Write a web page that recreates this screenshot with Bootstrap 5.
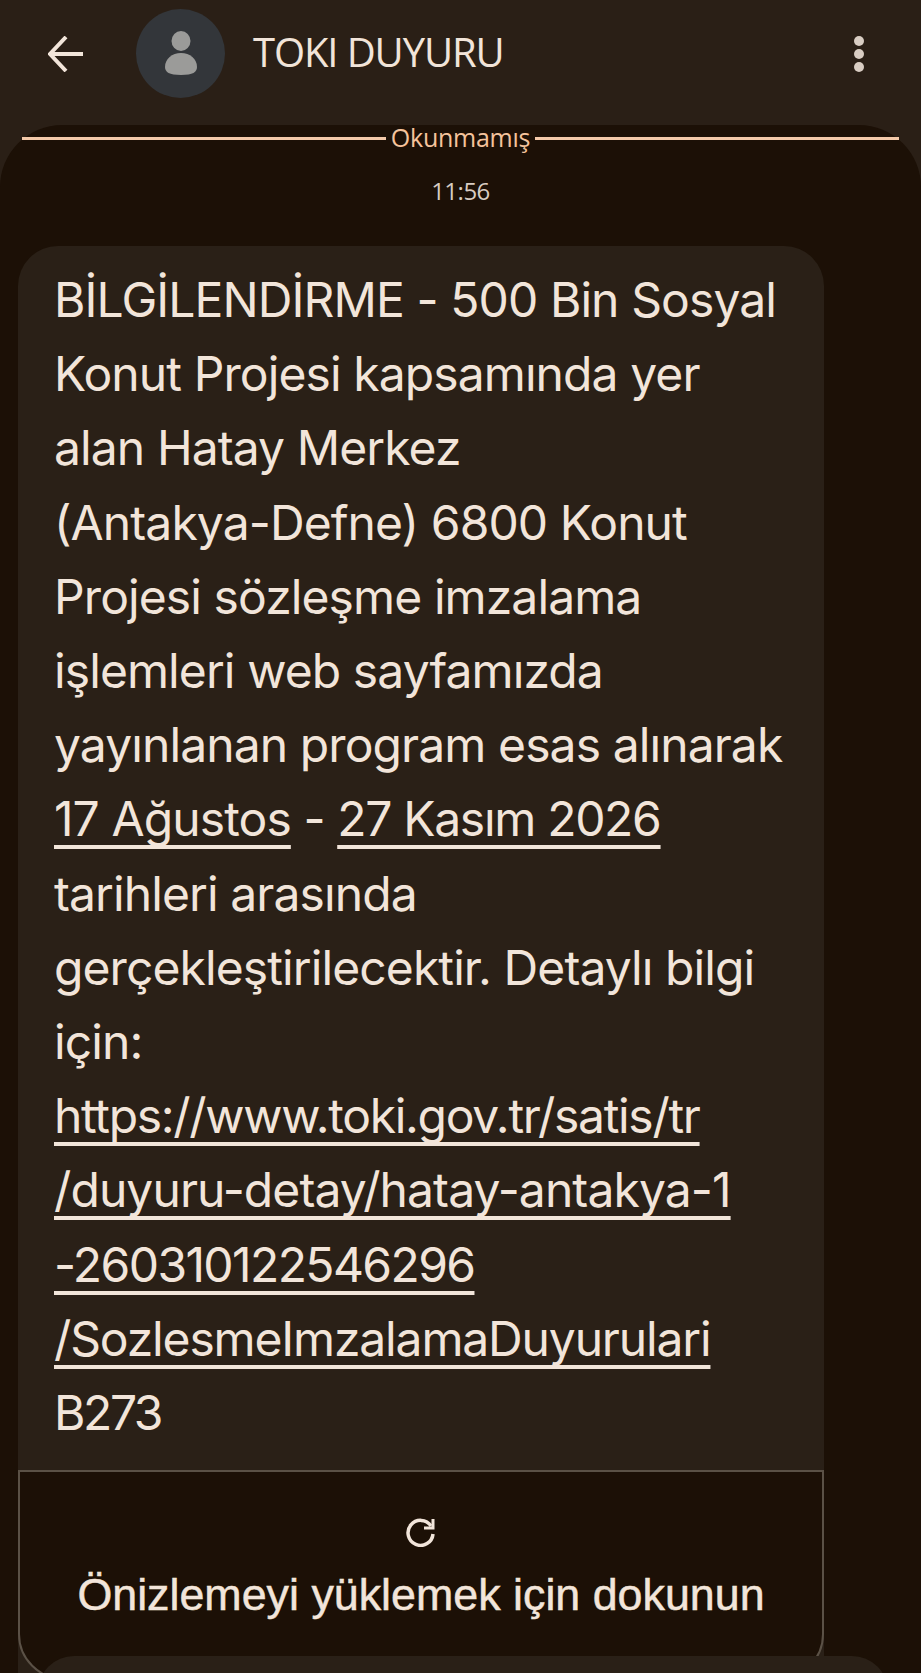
<!doctype html>
<html lang="tr"><head><meta charset="utf-8">
<link rel="stylesheet" href="https://cdn.jsdelivr.net/npm/bootstrap@5.3.0/dist/css/bootstrap.min.css">
<style>
html,body{margin:0;background:#2a1f16;height:1673px;overflow:hidden;font-family:"Inter","Liberation Sans",sans-serif;color:#f2e5da}
.topbar{height:125px;padding:0 55px 17px 48px}
.avatarc{width:89px;height:89px;background:#33363a;margin-left:52px;margin-top:-2px}
.ttl{font-size:40px;font-family:"Open Sans",sans-serif;margin:-4px 0 0 28px;letter-spacing:-1.1px;color:#f1e4d9}
.panel{background:#1c1006;border-radius:62px 62px 0 0;height:1548px}
.unread{padding:0 22px;height:25px;color:#f5c39c;font-size:25px;gap:5px;font-family:"Open Sans",sans-serif;letter-spacing:-.25px;line-height:25px}
.unread i{flex:1;height:3px;background:#f4c9a9;display:block;margin-top:2px}
.stamp{font-size:24px;color:#d8ccc2;text-align:center;margin-top:23px;height:73px;font-family:"Open Sans",sans-serif;letter-spacing:-.5px;line-height:36px}
.bubble{margin-left:18px;width:806px;background:#2a2017;border-radius:40px 40px 0 0}
.msg{padding:17px 0 20px 36px;font-size:48px;line-height:74.2px;white-space:nowrap;font-family:"Inter",sans-serif;letter-spacing:-.9px}
.msg u{text-underline-offset:9px;text-decoration-thickness:4px;text-decoration-skip-ink:none}
.tight1{letter-spacing:-1.3px}
.tight2{letter-spacing:-1.15px}
.tight3{letter-spacing:-1.6px}
.tight4{letter-spacing:-2.4px}
.prev{height:210px;background:#1c1006;border:2px solid #5b5146;border-radius:0 0 46px 46px;padding-top:45px}
.prev svg{display:block;margin:0 auto}
.prevt{font-size:44.800px;font-family:"Liberation Sans",sans-serif;margin-top:14px;color:#f2e5da;-webkit-text-stroke:.5px #f2e5da}
.nextb{height:40px;margin:-24px 33px 0 38px;background:#2a2017;border-radius:36px 36px 0 0;position:relative}
</style></head><body>
<div class="topbar d-flex align-items-center">
<svg width="36" height="36" viewBox="0 0 36 36" fill="none" stroke="#f2e5da" stroke-width="4"><path d="M35 18H3M18 1 2 18l16 17"/></svg>
<div class="avatarc rounded-circle d-flex align-items-center justify-content-center"><svg width="32" height="44" viewBox="0 0 32 44" fill="#9b9b99"><ellipse cx="16" cy="10" rx="9.500" ry="10"/><path d="M16 22c9 0 16 6 16 14 0 5-4 8-16 8S0 41 0 36c0-8 7-14 16-14z"/></svg></div>
<div class="ttl">TOKI DUYURU</div>
<svg class="ms-auto" width="14" height="36" viewBox="0 0 14 36" fill="#d9cdc3"><circle cx="7" cy="5" r="5"/><circle cx="7" cy="18" r="5"/><circle cx="7" cy="31" r="5"/></svg>
</div>
<div class="panel">
<div class="unread d-flex align-items-center"><i></i><span>Okunmamış</span><i></i></div>
<div class="stamp">11:56</div>
<div class="bubble">
<div class="msg">BİLGİLENDİRME - 500 Bin Sosyal<br>Konut Projesi kapsamında yer<br>alan Hatay Merkez<br>(Antakya-Defne) 6800 Konut<br>Projesi sözleşme imzalama<br>işlemleri web sayfamızda<br>yayınlanan program esas alınarak<br><u>17 Ağustos</u> - <u class="tight1">27 Kasım 2026</u><br>tarihleri arasında<br>gerçekleştirilecektir. Detaylı bilgi<br>için:<br><u class="tight1">https://www.toki.gov.tr/satis/tr</u><br><u>/duyuru-detay/hatay-antakya-1</u><br><u class="tight3">-260310122546296</u><br><u class="tight2">/SozlesmeImzalamaDuyurulari</u><br><span class="tight4">B273</span></div>
<div class="prev text-center">
<svg width="30" height="30" viewBox="0 0 30 30" fill="none" stroke="#f2e5da" stroke-width="3.500"><path d="M25 9A12.500 12.500 0 1 0 27 17"/><path d="M27 2v9H18" stroke-width="3"/></svg>
<div class="prevt">Önizlemeyi yüklemek için dokunun</div>
</div>
</div>
<div class="nextb"></div>
</div>
</body></html>
